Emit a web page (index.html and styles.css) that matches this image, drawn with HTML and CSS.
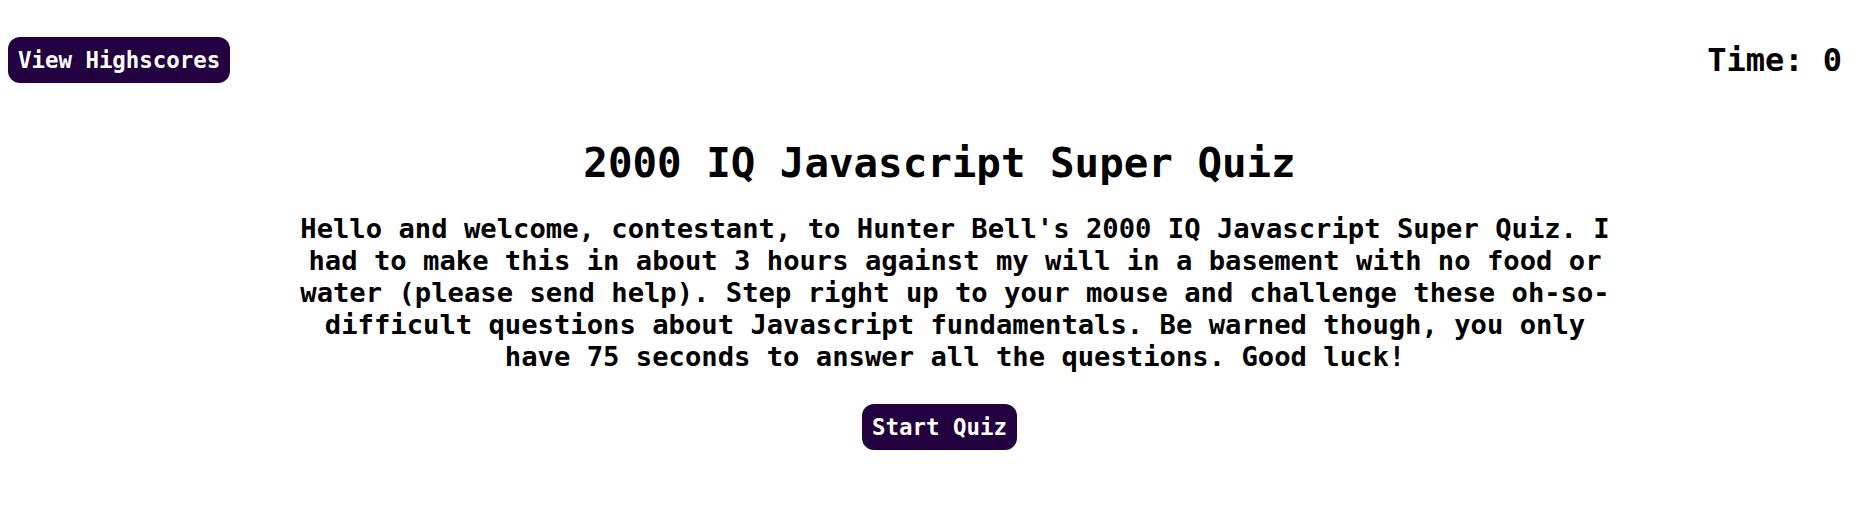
FILE: index.html
```html
<!DOCTYPE html>
<html lang="en">
<head>
<meta charset="utf-8">
<title>2000 IQ Javascript Super Quiz</title>
<link rel="stylesheet" href="styles.css">
</head>
<body>
  <header class="topbar">
    <button class="btn">View Highscores</button>
    <div class="timer">Time: <span>0</span></div>
  </header>
  <main class="intro">
    <h1 class="title">2000 IQ Javascript Super Quiz</h1>
    <p class="blurb">Hello and welcome, contestant, to Hunter Bell's 2000 IQ Javascript Super Quiz. I had to make this in about 3 hours against my will in a basement with no food or water (please send help). Step right up to your mouse and challenge these oh-so-difficult questions about Javascript fundamentals. Be warned though, you only have 75 seconds to answer all the questions. Good luck!</p>
    <button class="btn">Start Quiz</button>
  </main>
</body>
</html>
```

FILE: styles.css
```css
body {
  margin: 8px;
  background: #ffffff;
  color: #000000;
  font-family: "DejaVu Sans Mono", "Liberation Mono", monospace;
  font-weight: bold;
}

.topbar {
  display: flex;
  justify-content: space-between;
  align-items: center;
  padding-top: 29px;
}

.btn {
  font-family: "DejaVu Sans Mono", "Liberation Mono", monospace;
  font-weight: bold;
  font-size: 22.4px;
  line-height: 26px;
  padding: 10px 10px;
  border: none;
  border-radius: 12px;
  background: #230140;
  color: #ffffff;
  cursor: pointer;
}

.timer {
  font-size: 32px;
  line-height: 38px;
  padding-right: 21px;
}

.intro {
  margin-left: 8px;
  text-align: center;
  display: flex;
  flex-direction: column;
  align-items: center;
}

.title {
  font-size: 40.8px;
  line-height: 48px;
  margin: 56px 0 0;
}

.blurb {
  font-size: 27.2px;
  line-height: 32px;
  width: 1330px;
  padding-left: 31px;
  margin: 26px 0 31px;
}
```
